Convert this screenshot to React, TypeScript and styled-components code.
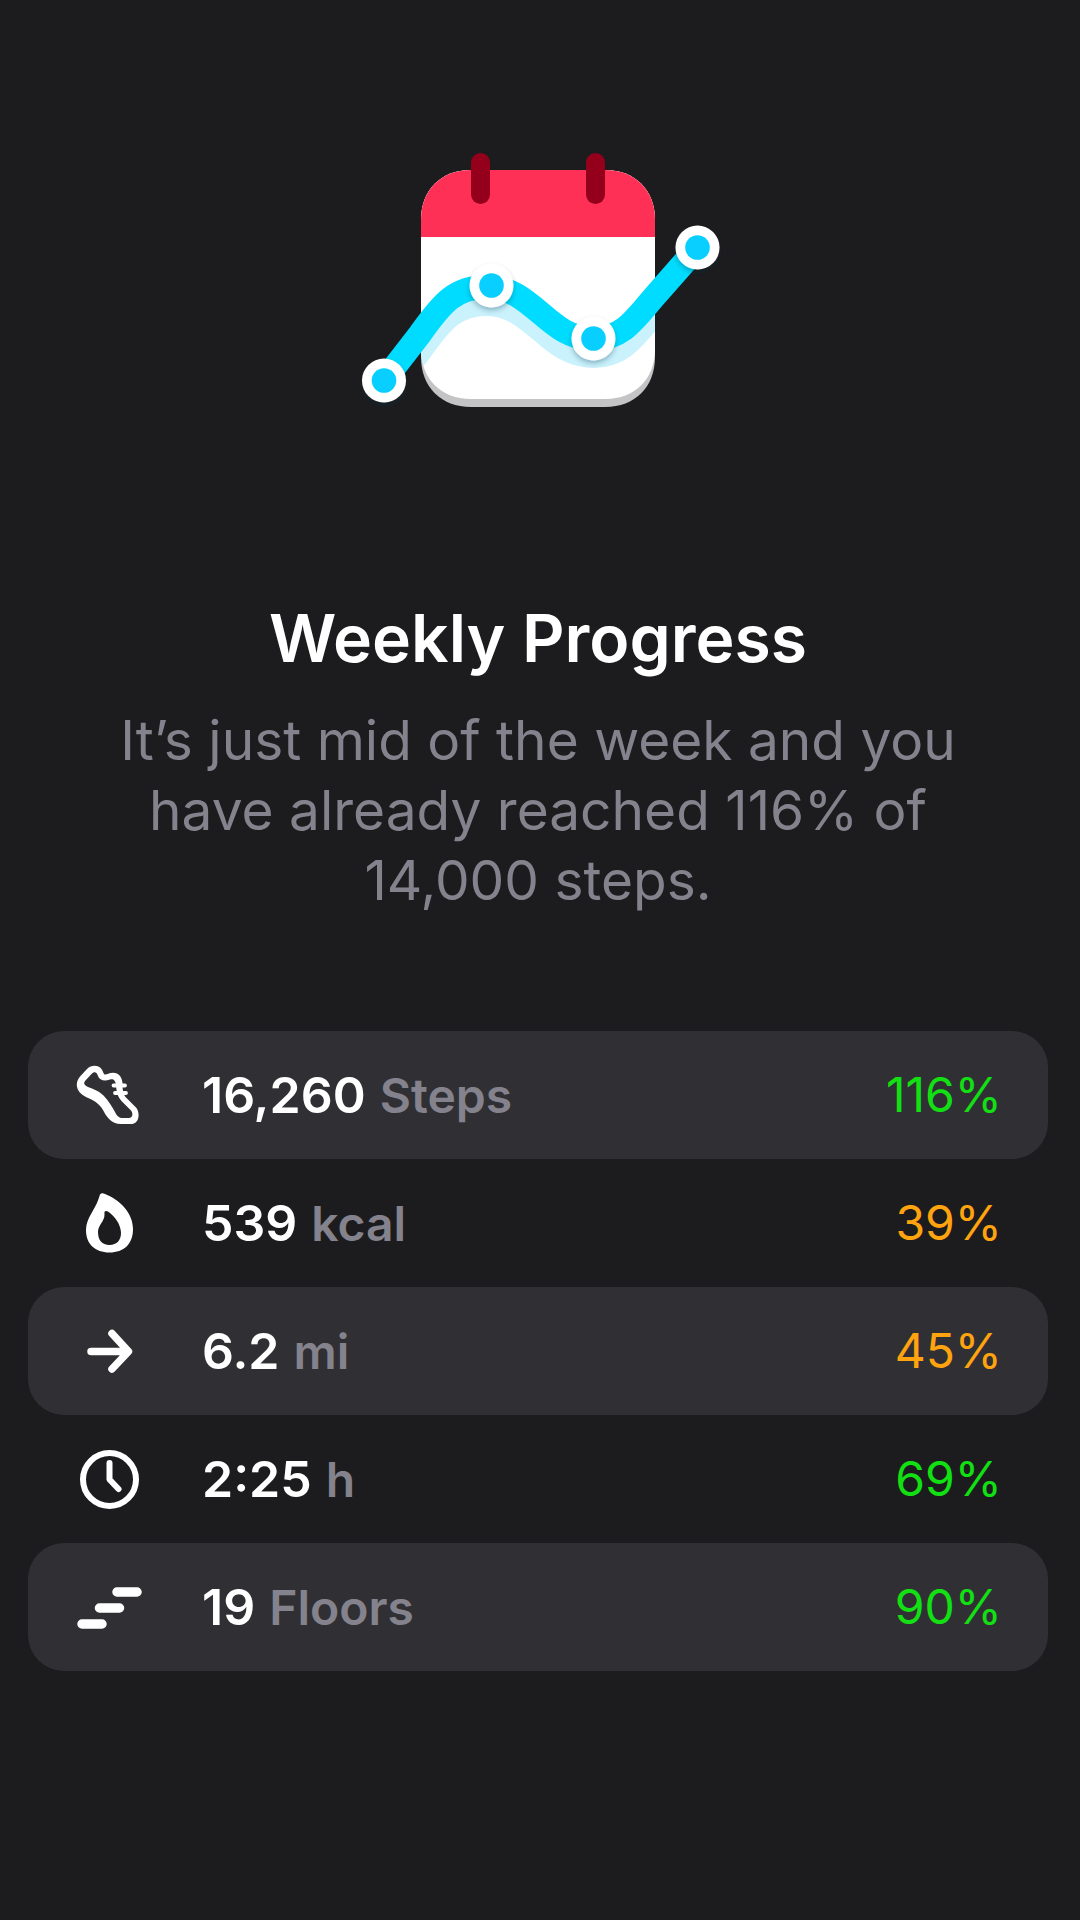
import React from "react";
import styled, { createGlobalStyle } from "styled-components";

const GlobalStyle = createGlobalStyle`
  *, *::before, *::after { box-sizing: border-box; }
  html, body { margin: 0; background: #1c1c1e; }
  body {
    font-family: Inter, "Noto Sans", "Liberation Sans", sans-serif;
    -webkit-font-smoothing: antialiased;
  }
`;

const Screen = styled.main`
  min-height: 100vh;
  padding: 140px 32px 140px 28px;
  display: flex;
  flex-direction: column;
  align-items: center;
  background: #1c1c1e;
  color: #ffffff;
`;

const Illustration = styled.svg`
  display: block;
  width: 376px;
  height: 280px;
`;

const Header = styled.header`
  max-width: 880px;
  margin-top: 174px;
  text-align: center;
`;

const Title = styled.h1`
  margin: 0;
  font-size: 66px;
  line-height: 88px;
  font-weight: 600;
`;

const Summary = styled.p`
  margin: 23px 0 0;
  font-size: 55px;
  line-height: 70px;
  font-weight: 400;
  color: #84838d;
`;

const StatList = styled.ul`
  align-self: stretch;
  margin: 116px 0 0;
  padding: 0;
  list-style: none;
`;

const StatRow = styled.li`
  display: grid;
  grid-template-columns: 72px 1fr auto;
  align-items: center;
  column-gap: 57px;
  height: 128px;
  padding: 0 46px 0 45px;
  border-radius: 36px;
  font-size: 50px;
  line-height: 64px;

  &:nth-child(odd) {
    background: #303034;
  }
`;

const StatIcon = styled.svg`
  display: block;
  width: 72px;
  height: 72px;
  fill: none;
  stroke: #ffffff;
  stroke-linecap: round;
  stroke-linejoin: round;
`;

const Value = styled.span`
  font-weight: 600;
`;

const Unit = styled.span`
  font-size: 48px;
  font-weight: 600;
  color: #84838d;
`;

const Percent = styled.span<{ $reached: boolean }>`
  font-size: 48px;
  color: ${(p) => (p.$reached ? "#12e012" : "#ffa30f")};
`;

const points = [
  [34, 240.5],
  [141.5, 145.5],
  [243.5, 198.5],
  [347.5, 107.5],
];

const trend =
  "M34 240.5 L70 194 C92 163 105 147 137 147 C183 147 198 199 243 199 C273 199 286 178 304 157 L347.5 107.5";

function CalendarTrend() {
  return (
    <Illustration viewBox="0 0 376 280" role="img" aria-label="Calendar with trend line">
      <defs>
        <clipPath id="card">
          <path d="M71 80 C71 50 91 30 121 30 H255 C285 30 305 50 305 80 V209 C305 239 285 259 255 259 H121 C91 259 71 239 71 209 Z" />
        </clipPath>
        <filter id="drop" x="-30%" y="-30%" width="160%" height="160%">
          <feDropShadow dx="0" dy="3" stdDeviation="2.5" floodColor="#003040" floodOpacity="0.3" />
        </filter>
      </defs>
      <path fill="#c4c4c6" d="M71 80 C71 50 91 30 121 30 H255 C285 30 305 50 305 80 V217 C305 247 285 267 255 267 H121 C91 267 71 247 71 217 Z" />
      <g clipPath="url(#card)">
        <rect x="71" y="30" width="234" height="229" fill="#ffffff" />
        <rect x="71" y="30" width="234" height="67" fill="#ff3056" />
        <path d={trend} transform="translate(0 17)" fill="none" stroke="#c9f2fd" strokeWidth="24" />
      </g>
      <rect x="121" y="13" width="19" height="51" rx="9.5" fill="#94001c" />
      <rect x="236" y="13" width="19" height="51" rx="9.5" fill="#94001c" />
      <path d={trend} fill="none" stroke="#00dcff" strokeWidth="24" />
      {points.map(([x, y]) => (
        <g key={x}>
          <circle cx={x} cy={y} r="22" fill="#ffffff" filter="url(#drop)" />
          <circle cx={x} cy={y} r="12.3" fill="#08cfff" />
        </g>
      ))}
    </Illustration>
  );
}

const ShoeIcon = () => (
  <StatIcon viewBox="0 0 72 72" aria-hidden="true">
    <path
      fill="#ffffff"
      fillRule="evenodd"
      stroke="none"
      d="M7.500 17 L14 10 C18 6 25 5.500 28.500 10 C30.500 13 30.500 15.500 32 15.500 C34 15.500 36 13.700 40 13.700 C46 13.700 49 18 49.500 24 C49.500 31 50 35 53 38.500 L63 48.500 C67.500 54 66.500 65 58 65 H48 C38 65 33 57 30 51 C26 44 20 41 14 38.500 C4 34 0.500 25 7.500 17 Z M12 22 C10.500 24 11 26 14 27.500 C20 30 26 32 30.500 36.500 C36 42 39 48 42 53 C44 57 46 59 50 59 H56 C59.500 59 60.500 54.500 58 51.500 L48.500 42 C44 37 43.500 32 43 26 C42.500 21 40 19.500 37 20.500 C31 23 26.500 21 25 17 C23.500 12.500 21 12.500 18.500 15 Z"
    />
    <path strokeWidth="3.8" d="M40.500 26.500 H52 M42 34 H53" />
  </StatIcon>
);

const FlameIcon = () => (
  <StatIcon viewBox="0 0 72 72" aria-hidden="true">
    <path
      fill="#ffffff"
      fillRule="evenodd"
      stroke="none"
      d="M27 7.500 Q28.500 5.500 32 7 C47 13 60 26 60 42 C60 57 51 65.500 36.500 65.500 C22 65.500 13 57 13 43 C13 31 22 23 25.500 12 Z M33 24 Q31 24 31.500 27 C32 34 25 38 25 45 C25 53 29 58 36.500 58 C44 58 48 53 48 46 C48 38 42 29 35 24.500 Q34 24 33 24 Z"
    />
  </StatIcon>
);

const ArrowIcon = () => (
  <StatIcon viewBox="0 0 72 72" aria-hidden="true">
    <path strokeWidth="7.5" d="M18 36.500 H55 M39 18.500 L55.500 36.500 L39 54" />
  </StatIcon>
);

const ClockIcon = () => (
  <StatIcon viewBox="0 0 72 72" aria-hidden="true">
    <circle cx="36.500" cy="36.500" r="26.500" strokeWidth="6" />
    <path strokeWidth="6" d="M36.500 20 V36.500 L45.500 46" />
  </StatIcon>
);

const StairsIcon = () => (
  <StatIcon viewBox="0 0 72 72" aria-hidden="true">
    <path strokeWidth="9.5" d="M44 21 H64 M26.500 37 H46.500 M9 53 H29" />
  </StatIcon>
);

const stats = [
  { icon: ShoeIcon, value: "16,260", unit: "Steps", percent: 116 },
  { icon: FlameIcon, value: "539", unit: "kcal", percent: 39 },
  { icon: ArrowIcon, value: "6.2", unit: "mi", percent: 45 },
  { icon: ClockIcon, value: "2:25", unit: "h", percent: 69 },
  { icon: StairsIcon, value: "19", unit: "Floors", percent: 90 },
];

export default function App() {
  return (
    <>
      <GlobalStyle />
      <Screen>
        <CalendarTrend />
        <Header>
          <Title>Weekly Progress</Title>
          <Summary>
            It’s just mid of the week and you have already reached 116% of 14,000 steps.
          </Summary>
        </Header>
        <StatList>
          {stats.map(({ icon: Icon, value, unit, percent }) => (
            <StatRow key={unit}>
              <Icon />
              <span>
                <Value>{value}</Value> <Unit>{unit}</Unit>
              </span>
              <Percent $reached={percent > 50}>{percent}%</Percent>
            </StatRow>
          ))}
        </StatList>
      </Screen>
    </>
  );
}
